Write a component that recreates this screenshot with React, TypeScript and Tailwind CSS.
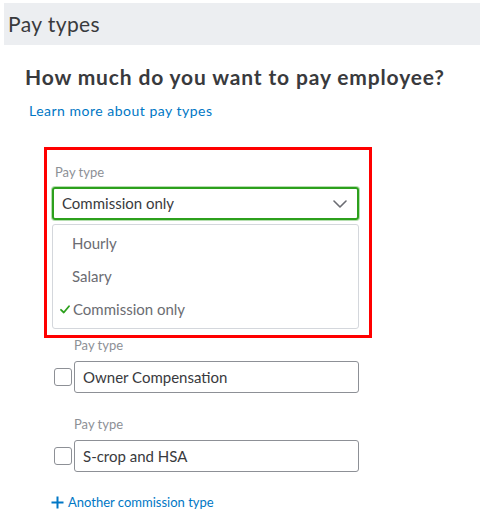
import React from "react"

const font = { fontFamily: 'Lato, "Open Sans", Arial, sans-serif' }

function Chevron() {
  return (
    <svg width="14" height="8" viewBox="0 0 14 8" fill="none">
      <path d="M1 1 L7 7 L13 1" stroke="#6B6C72" strokeWidth="1.6" strokeLinecap="round" strokeLinejoin="round" />
    </svg>
  )
}

function Check() {
  return (
    <svg width="10" height="9" viewBox="0 0 10 9" fill="none">
      <path d="M1 4.8 L3.8 7.5 L9 1.2" stroke="#2CA01C" strokeWidth="1.8" strokeLinecap="round" strokeLinejoin="round" />
    </svg>
  )
}

function CheckRow({ value }: { value: string }) {
  return (
    <div className="flex flex-col">
      <label className="ml-[74px] text-[13px] leading-[16px] text-[#8D9096]">Pay type</label>
      <div className="mt-[8px] flex items-center">
        <div className="ml-[54px] h-[18px] w-[18px] shrink-0 rounded-[3px] border border-[#8D9096] bg-white" />
        <div className="ml-[2px] flex h-[32px] w-[285px] items-center rounded-[3px] border border-[#8D9096] px-[8px] text-[15px] text-[#393A3D]">
          {value}
        </div>
      </div>
    </div>
  )
}

export default function App() {
  return (
    <div className="relative h-[519px] w-[480px] overflow-hidden bg-white" style={font}>
      {/* header */}
      <div className="ml-[4px] mt-[3px] flex h-[42px] items-center bg-[#ECEEF1] pl-[4px] text-[21px] tracking-[0.4px] text-[#393A3D]">
        Pay types
      </div>

      <h1 className="ml-[25px] mt-[19px] text-[21px] font-bold leading-[26px] tracking-[0.85px] text-[#393A3D]">
        How much do you want to pay employee?
      </h1>
      <a className="ml-[29px] mt-[12px] block text-[14px] leading-[18px] tracking-[0.5px] text-[#0077C5]">Learn more about pay types</a>

      {/* highlighted pay type select */}
      <div className="ml-[44px] mt-[27px] h-[191px] w-[328px] border-[3px] border-[#FF0000] pl-[5px] pt-[14px]">
        <label className="ml-[3px] block text-[13px] leading-[16px] text-[#8D9096]">Pay type</label>
        <div className="mt-[7px] flex h-[33px] w-[307px] items-center justify-between rounded-[3px] border-2 border-[#2CA01C] pl-[8px] pr-[10px] text-[15px] text-[#393A3D] shadow-[0_0_0_1px_rgba(44,160,28,0.35)]">
          <span>Commission only</span>
          <Chevron />
        </div>
        <div className="mt-[4px] flex h-[105px] w-[307px] flex-col justify-center gap-[12px] rounded-[3px] border border-[#D4D7DC] text-[15px] leading-[21px] text-[#6B6C72]">
          <div className="pl-[19px]">Hourly</div>
          <div className="pl-[19px]">Salary</div>
          <div className="flex items-center">
            <span className="ml-[7px] mr-[3px] flex w-[10px] justify-center"><Check /></span>
            <span>Commission only</span>
          </div>
        </div>
      </div>

      <div className="mt-[-1px] flex flex-col gap-[23px]">
        <CheckRow value="Owner Compensation" />
        <CheckRow value="S-crop and HSA" />
      </div>

      <div className="ml-[51px] mt-[21px] flex items-center gap-[4px] text-[13px] text-[#0077C5]">
        <svg width="13" height="13" viewBox="0 0 13 13">
          <path d="M6.5 0.5 V12.5 M0.5 6.5 H12.5" stroke="#0077C5" strokeWidth="2" />
        </svg>
        <span>Another commission type</span>
      </div>
    </div>
  )
}
